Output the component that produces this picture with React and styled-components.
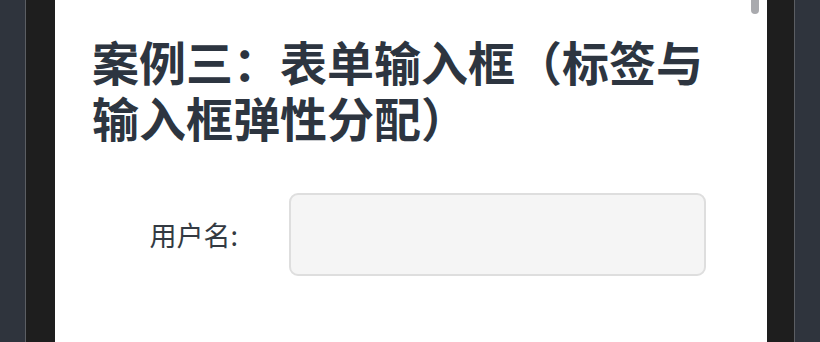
import React from "react";
import styled, { createGlobalStyle } from "styled-components";

const Global = createGlobalStyle`
  html, body { margin: 0; padding: 0; background: #2f343d; overflow: hidden; }
  #root { height: 342px; }
`;

const Frame = styled.div`
  display: flex;
  height: 342px;
  width: 820px;
  font-family: "Noto Sans CJK SC", "Noto Sans", sans-serif;
`;

const Edge = styled.div`
  width: ${(p) => p.$w}px;
  flex: 0 0 ${(p) => p.$w}px;
  background: #2f343d;
`;

const Divider = styled.div`
  flex: 0 0 1px;
  background: #5b5e63;
`;

const Gutter = styled.div`
  flex: 0 0 ${(p) => p.$w}px;
  background: #1e1e1e;
`;

const Panel = styled.div`
  position: relative;
  flex: 0 0 712px;
  background: #ffffff;
  padding: 33px 37px 0 37px;
  box-sizing: border-box;
`;

const ScrollThumb = styled.div`
  position: absolute;
  top: -6px;
  left: 696px;
  width: 8px;
  height: 20px;
  border-radius: 4px;
  background: #a9aaae;
`;

const Title = styled.h1`
  margin: 0;
  font-size: 47px;
  line-height: 56px;
  font-weight: 700;
  color: #2d3540;
  letter-spacing: 0;
`;

const Row = styled.div`
  display: flex;
  align-items: center;
  margin-top: 48px;
`;

const Label = styled.label`
  flex: 0 0 146px;
  text-align: right;
  font-size: 27px;
  color: #333a42;
  padding-right: 51px;
  box-sizing: content-box;
  white-space: nowrap;
`;

const Input = styled.input`
  width: 417px;
  height: 83px;
  box-sizing: border-box;
  border: 2px solid #dedede;
  border-radius: 9px;
  background: #f5f5f5;
  outline: none;
  padding: 0 16px;
  font-size: 22px;
`;

export default function App() {
  return (
    <>
      <Global />
      <Frame>
        <Edge $w={25} />
        <Divider />
        <Gutter $w={29} />
        <Panel>
          <ScrollThumb />
          <Title>案例三：表单输入框（标签与输入框弹性分配）</Title>
          <Row>
            <Label>用户名:</Label>
            <Input type="text" />
          </Row>
        </Panel>
        <Gutter $w={27} />
        <Divider />
        <Edge $w={25} />
      </Frame>
    </>
  );
}
